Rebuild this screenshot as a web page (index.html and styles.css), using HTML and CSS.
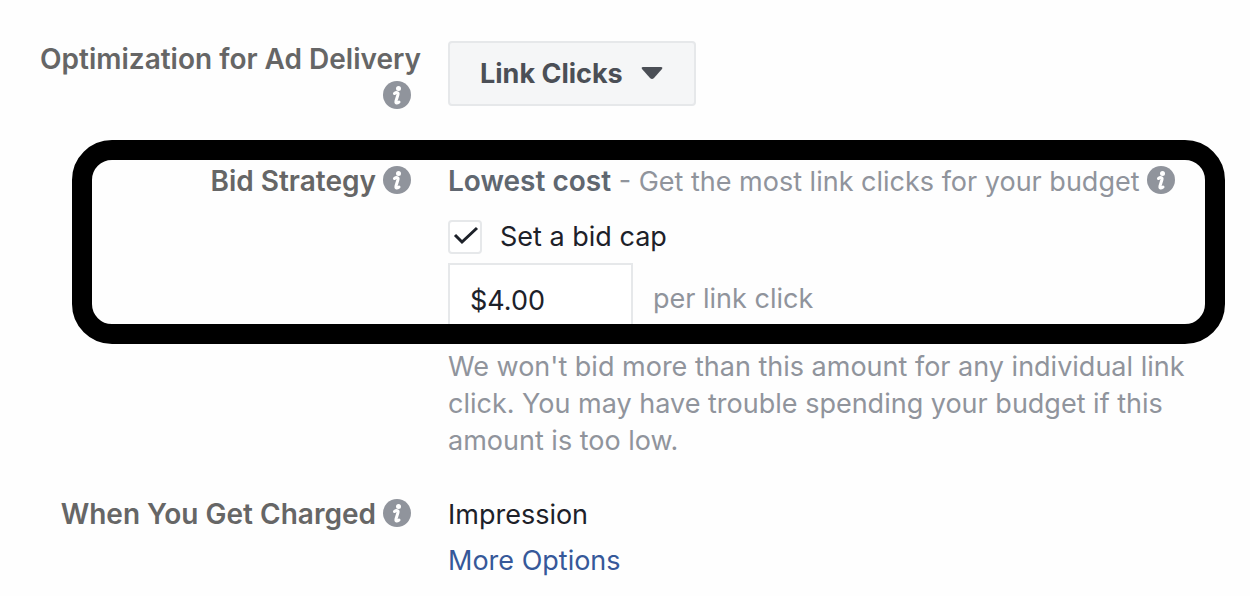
FILE: index.html
```
<!DOCTYPE html>
<html lang="en">
<head>
    <meta charset="UTF-8">
    <meta name="viewport" content="width=device-width, initial-scale=1.0">
    <title>Optimization & Bid Strategy</title>
    <link rel="stylesheet" href="styles.css">
</head>
<body>
    <!-- Shared info icon -->
    <svg class="sprite" aria-hidden="true">
        <symbol id="info" viewBox="0 0 28 28">
            <circle cx="14" cy="14" r="14" fill="#90949c"/>
            <circle cx="15.5" cy="7.5" r="2.5" fill="#fff"/>
            <path d="M11.5 12.5c2-1.5 4-1 3.5 1l-2 6.5c-.5 2.500 1 2.500 3 1" fill="none" stroke="#fff" stroke-width="3" stroke-linecap="round" stroke-linejoin="round"/>
        </symbol>
    </svg>

    <form class="settings">
        <div class="row">
            <div class="row-label">
                <label for="optimization">Optimization for Ad Delivery</label>
                <svg class="info"><use href="#info"/></svg>
            </div>
            <div class="row-content">
                <div class="dropdown">
                    <select id="optimization">
                        <option>Link Clicks</option>
                    </select>
                    <svg class="caret" viewBox="0 0 22 14"><path d="M2 1h18q2 0 1 2l-8 9q-2 2-4 0L1 3q-1-2 1-2z" fill="#4b4f56"/></svg>
                </div>
            </div>
        </div>

        <div class="row bid">
            <div class="row-label">
                <span>Bid Strategy</span>
                <svg class="info"><use href="#info"/></svg>
            </div>
            <div class="row-content">
                <p class="strategy">
                    <strong>Lowest cost</strong> - Get the most link clicks for your budget
                    <svg class="info"><use href="#info"/></svg>
                </p>
                <label class="bid-cap">
                    <input type="checkbox" class="checkbox" checked>
                    <svg class="tick" viewBox="0 0 34 34"><path d="M7 15l7 7L29 8" fill="none" stroke="#1d2129" stroke-width="3"/></svg>
                    Set a bid cap
                </label>
                <div class="amount">
                    <input type="text" id="bid-amount" value="$4.00">
                    <label for="bid-amount">per link click</label>
                </div>
                <p class="help">We won't bid more than this amount for any individual link click. You may have trouble spending your budget if this amount is too low.</p>
            </div>
            <div class="highlight"></div>
        </div>

        <div class="row">
            <div class="row-label">
                <span>When You Get Charged</span>
                <svg class="info"><use href="#info"/></svg>
            </div>
            <div class="row-content">
                <p>Impression</p>
                <a href="#" class="more">More Options</a>
            </div>
        </div>
    </form>
</body>
</html>
```
FILE: styles.css
```
* {
    box-sizing: border-box;
}

body {
    margin: 0;
    background-color: #fefefe;
    color: #1d2129;
    font-family: Inter, "Liberation Sans", sans-serif;
    font-size: 27px;
    line-height: 37px;
}

p {
    margin: 0;
}

.sprite {
    display: none;
}

.settings {
    display: flex;
    flex-direction: column;
    gap: 37px;
    padding: 41px 25px 16px 24px;
}

.row {
    display: grid;
    grid-template-columns: 397px 1fr;
    column-gap: 27px;
    position: relative;
}

.row-label {
    color: #666;
    font-size: 28px;
    font-weight: 600;
    text-align: right;
}

.row-label .info {
    margin-right: 10px;
}

.info {
    width: 28px;
    height: 28px;
    vertical-align: -3px;
}

/* Dropdown */
.dropdown {
    display: inline-block;
    position: relative;
    vertical-align: top;
}

.dropdown select {
    appearance: none;
    height: 65px;
    padding: 0 71px 0 30px;
    background-color: #f5f6f7;
    border: 2px solid #e6e8ea;
    border-radius: 4px;
    color: #4b4f56;
    font: inherit;
    font-weight: 700;
    cursor: pointer;
}

.caret {
    position: absolute;
    top: 25px;
    right: 33px;
    width: 22px;
    height: 14px;
    pointer-events: none;
}

/* Bid strategy */
.bid {
    margin-top: 11px;
}

.strategy,
.amount label,
.help {
    color: #90949c;
}

.strategy strong {
    color: #606770;
    font-size: 28px;
    font-weight: 600;
}

.bid-cap {
    display: flex;
    align-items: center;
    position: relative;
    gap: 18px;
    margin-top: 18px;
}

.checkbox {
    appearance: none;
    width: 34px;
    height: 34px;
    margin: 0;
    background-color: #fff;
    border: 2px solid #e6e8ea;
    border-radius: 4px;
}

.tick {
    position: absolute;
    left: 0;
    width: 34px;
    height: 34px;
    display: none;
    pointer-events: none;
}

.checkbox:checked + .tick {
    display: block;
}

.amount {
    display: flex;
    align-items: center;
    gap: 20px;
    margin-top: 8px;
}

.amount input {
    width: 185px;
    height: 70px;
    padding: 4px 20px 0;
    background-color: #fff;
    border: 2px solid #e6e8ea;
    color: #1d2129;
    font: inherit;
}

.help {
    margin-top: 15px;
}

/* Thick frame drawn over the bid settings */
.highlight {
    position: absolute;
    top: -23px;
    right: 0;
    bottom: 115px;
    left: 48px;
    border: 20px solid #000;
    border-radius: 40px;
    pointer-events: none;
}

.more {
    display: inline-block;
    margin-top: 9px;
    color: #365899;
    text-decoration: none;
}
```
